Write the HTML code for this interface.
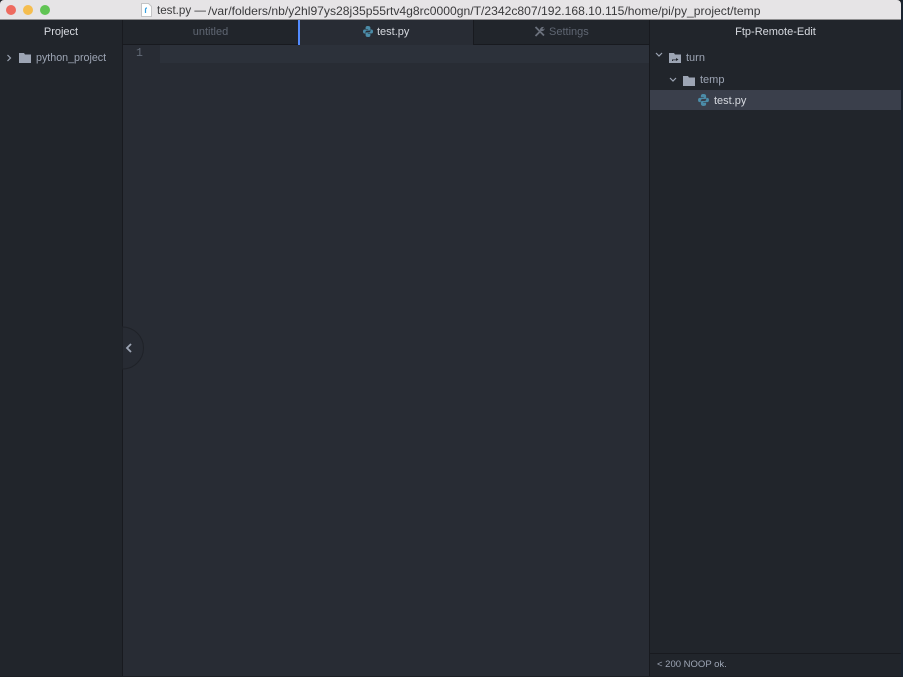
<!DOCTYPE html>
<html>
<head>
<meta charset="utf-8">
<style>
html,body{margin:0;padding:0;width:903px;height:677px;overflow:hidden;background:#1c1f24}
body{font-family:"Liberation Sans",sans-serif;position:relative}
#w{left:0;top:0;width:903px;height:677px;filter:blur(.35px)}
div,svg,span{position:absolute;box-sizing:border-box}
.t{white-space:nowrap;line-height:14px;height:14px}
</style>
</head>
<body>
<div id="w">
<!-- window edge -->
<div style="left:901px;top:0;width:2px;height:677px;background:#1a2430"></div>
<!-- title bar -->
<div style="left:0;top:0;width:901px;height:20px;background:#e6e4e6;border-bottom:1px solid #8f8e90;border-radius:4px 4px 0 0"></div>
<div style="left:6px;top:5px;width:10px;height:10px;border-radius:50%;background:#ee6a5f"></div>
<div style="left:23px;top:5px;width:10px;height:10px;border-radius:50%;background:#f5bd4f"></div>
<div style="left:40px;top:5px;width:10px;height:10px;border-radius:50%;background:#61c454"></div>
<svg style="left:141px;top:3px" width="11" height="14" viewBox="0 0 11 14"><path d="M.5.5H7.5L10.5 3.5V13.5H.5Z" fill="#fff" stroke="#c4c4c6"/><path d="M4.5 10V6.2Q4.5 5 6 5" fill="none" stroke="#3aa0e0" stroke-width="1.2"/></svg>
<div class="t" style="left:157px;top:4px;font-size:11.6px;color:#3a3a3c">test.py —</div>
<div class="t" style="left:208px;top:4px;font-size:12.14px;color:#3a3a3c">/var/folders/nb/y2hl97ys28j35p55rtv4g8rc0000gn/T/2342c807/192.168.10.115/home/pi/py_project/temp</div>

<!-- left panel -->
<div style="left:0;top:20px;width:123px;height:656px;background:#21252b;border-right:1px solid #181a1f"></div>
<div class="t" style="left:0;top:25px;width:122px;text-align:center;font-size:11px;color:#d7dae0">Project</div>
<svg style="left:6px;top:54px" width="6" height="8" viewBox="0 0 6 8"><path d="M1.5 1L4.5 4L1.5 7" fill="none" stroke="#9da5b4" stroke-width="1.2"/></svg>
<svg style="left:19px;top:52px" width="12" height="11" viewBox="0 0 12 11"><path d="M0 1H5L6 2.5H12V11H0Z" fill="#9da5b4"/></svg>
<div class="t" style="left:36px;top:50.5px;font-size:10.7px;color:#9da5b4">python_project</div>

<!-- tabs -->
<div style="left:123px;top:20px;width:527px;height:25px;background:#21252b;border-bottom:1px solid #181a1f"></div>
<div class="t" style="left:123px;top:25px;width:175px;text-align:center;font-size:11px;color:#5f6672">untitled</div>
<div style="left:298px;top:20px;width:176px;height:25px;background:#282c34;border-right:1px solid #181a1f"></div>
<div style="left:298px;top:20px;width:2px;height:25px;background:#528bff"></div>
<svg style="left:363px;top:26px" width="10" height="11" viewBox="0 0 10 11"><path d="M5 0C3 0 2.6.8 2.6 1.8V3H5.2V3.5H1.5C.5 3.5 0 4.3 0 5.5S.5 7.5 1.5 7.5H2.5V6.2C2.5 5.2 3.2 4.6 4 4.6H6.4C7 4.6 7.4 4.1 7.4 3.5V1.8C7.4.7 6.5 0 5 0Z" fill="#4b8ca8"/><path d="M5 11C7 11 7.4 10.2 7.4 9.2V8H4.8V7.5H8.5C9.5 7.5 10 6.7 10 5.5S9.5 3.5 8.5 3.5H7.5V4.8C7.5 5.8 6.8 6.4 6 6.4H3.6C3 6.4 2.6 6.9 2.6 7.5V9.2C2.6 10.3 3.5 11 5 11Z" fill="#4b8ca8"/></svg>
<div class="t" style="left:377px;top:25px;font-size:11px;color:#d7dae0">test.py</div>
<svg style="left:534px;top:26px" width="11" height="11" viewBox="0 0 11 11"><path d="M1.5 1L10 9.5M1.5 10L6.5 5" fill="none" stroke="#6b717d" stroke-width="1.8"/><path d="M6 4.5C5.7 2.5 7.5.5 10 1L8.4 2.6L9 3.6L10.6 2.4C10.8 4.5 8.5 6 6 4.5Z" fill="#6b717d"/></svg>
<div class="t" style="left:549px;top:25px;font-size:11px;color:#5f6672">Settings</div>

<!-- editor -->
<div style="left:123px;top:45px;width:527px;height:631px;background:#282c34"></div>
<div style="left:160px;top:45px;width:490px;height:18px;background:#2c313a"></div>
<div class="t" style="left:136px;top:46.5px;font-size:11.5px;color:#636b78;font-family:'Liberation Mono',monospace">1</div>

<!-- collapse handle -->
<svg style="left:122px;top:326px" width="23" height="44" viewBox="0 0 23 44"><path d="M0.5 1A21 21 0 0 1 .5 43Z" fill="#272b33" stroke="#1f2228"/></svg>
<svg style="left:125px;top:343px" width="8" height="10" viewBox="0 0 8 10"><path d="M6 1L2 5L6 9" fill="none" stroke="#9da5b4" stroke-width="1.8"/></svg>

<!-- right panel -->
<div style="left:649px;top:20px;width:252px;height:656px;background:#21252b;border-left:1px solid #181a1f"></div>
<div class="t" style="left:650px;top:25px;width:251px;text-align:center;font-size:11px;color:#d7dae0">Ftp-Remote-Edit</div>
<svg style="left:655px;top:52px" width="8" height="6" viewBox="0 0 8 6"><path d="M1 1L4 4L7 1" fill="none" stroke="#9da5b4" stroke-width="1.2"/></svg>
<svg style="left:669px;top:52px" width="12" height="11" viewBox="0 0 12 11"><path d="M0 1H5L6 2.5H12V11H0Z" fill="#9da5b4"/><path d="M3 9V7.5H7V6L9.5 7.5L7 9V8.3H4V9Z" fill="#21252b"/></svg>
<div class="t" style="left:686px;top:50.5px;font-size:11px;color:#9da5b4">turn</div>
<svg style="left:669px;top:77px" width="8" height="6" viewBox="0 0 8 6"><path d="M1 1L4 4L7 1" fill="none" stroke="#9da5b4" stroke-width="1.2"/></svg>
<svg style="left:683px;top:75px" width="12" height="11" viewBox="0 0 12 11"><path d="M0 1H5L6 2.5H12V11H0Z" fill="#9da5b4"/></svg>
<div class="t" style="left:700px;top:73px;font-size:11px;color:#9da5b4">temp</div>
<div style="left:649.5px;top:90px;width:251.5px;height:20px;background:#3a3f4b"></div>
<svg style="left:698px;top:94px" width="11" height="12" viewBox="0 0 10 11"><path d="M5 0C3 0 2.6.8 2.6 1.8V3H5.2V3.5H1.5C.5 3.5 0 4.3 0 5.5S.5 7.5 1.5 7.5H2.5V6.2C2.5 5.2 3.2 4.6 4 4.6H6.4C7 4.6 7.4 4.1 7.4 3.5V1.8C7.4.7 6.5 0 5 0Z" fill="#4b8ca8"/><path d="M5 11C7 11 7.4 10.2 7.4 9.2V8H4.8V7.5H8.5C9.5 7.5 10 6.7 10 5.5S9.5 3.5 8.5 3.5H7.5V4.8C7.5 5.8 6.8 6.4 6 6.4H3.6C3 6.4 2.6 6.9 2.6 7.5V9.2C2.6 10.3 3.5 11 5 11Z" fill="#4b8ca8"/></svg>
<div class="t" style="left:714px;top:93.5px;font-size:11px;color:#d7dae0">test.py</div>
<div style="left:650px;top:653px;width:251px;height:1px;background:#181a1f"></div>
<div class="t" style="left:657px;top:658px;font-size:9.5px;color:#9da5b4">&lt; 200 NOOP ok.</div>
</div>
</body>
</html>
